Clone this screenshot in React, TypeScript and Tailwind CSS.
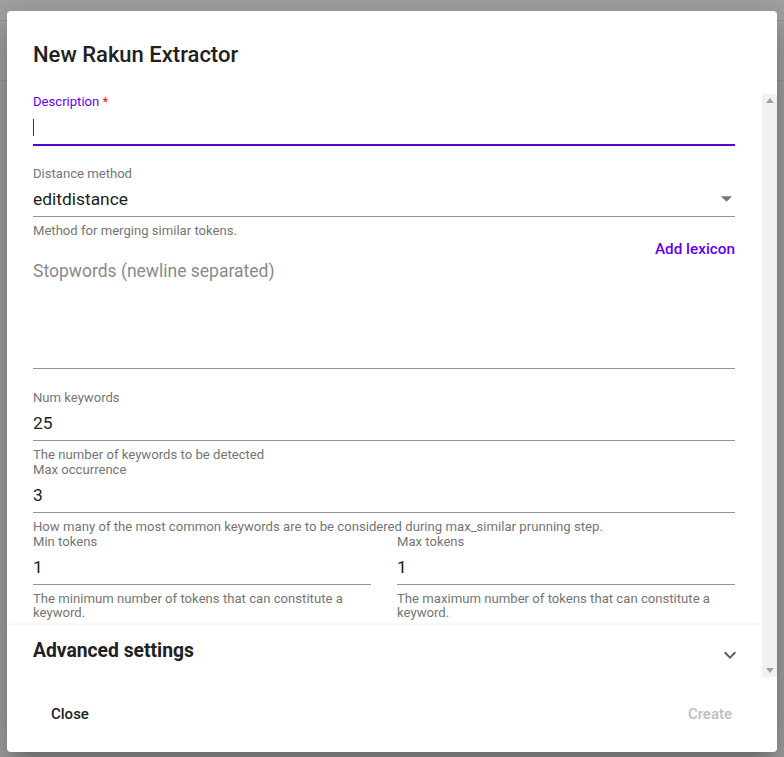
import React from "react";

const font = { fontFamily: "Roboto, 'Liberation Sans', sans-serif" };

function Field({
  label,
  value,
  helper,
}: {
  label: string;
  value: string;
  helper: React.ReactNode;
}) {
  return (
    <div className="flex flex-col">
      <div className="text-[13.1px] leading-[16px] text-[#757575]">{label}</div>
      <div className="h-[35px] border-b border-[#949494] flex items-center text-[17.4px] text-[#212121]">
        {value}
      </div>
      <div className="mt-[7px] text-[13.15px] leading-[14px] text-[#757575]">{helper}</div>
    </div>
  );
}

export default function App() {
  return (
    <div style={font} className="relative h-[757px] w-[784px] overflow-hidden bg-[#a2a2a2]">
      <div className="absolute left-0 right-0 top-[20px] h-px bg-[#939393]" />
      <div className="absolute left-0 right-0 top-[80px] h-px bg-[#939393]" />
      <div className="absolute left-[7px] top-[11px] w-[770px] h-[741px] bg-white rounded-[4px] shadow-[0_11px_15px_-7px_rgba(0,0,0,0.2),0_24px_38px_3px_rgba(0,0,0,0.14),0_9px_46px_8px_rgba(0,0,0,0.12)] flex flex-col overflow-hidden">
        <div className="h-[83px] pl-[26px] pt-[28px]">
          <div className="text-[22px] leading-[32px] font-medium text-[#212121]">New Rakun Extractor</div>
        </div>
        <div className="h-[583px] flex">
          <div className="flex-1 overflow-hidden flex flex-col">
            <div className="pl-[26px] pr-[27px] flex flex-col">
              {/* Description */}
              <div className="flex flex-col">
                <div className="text-[13.1px] leading-[16px] text-[#6200ee]">
                  Description <span className="text-[#f50057]">*</span>
                </div>
                <div className="h-[36px] border-b-2 border-[#5600d6] flex items-center">
                  <div className="w-px h-[17px] bg-[#5600d6] mt-[1px]" />
                </div>
              </div>
              <div className="mt-[20px]">
                <div className="text-[13.1px] leading-[16px] text-[#757575]">Distance method</div>
                <div className="h-[35px] border-b border-[#949494] flex items-center justify-between text-[17.4px] text-[#212121]">
                  <span>editdistance</span>
                  <svg width="11" height="6" viewBox="0 0 10 5" className="mr-[3px]">
                    <path d="M0 0 L5 5 L10 0 Z" fill="#757575" />
                  </svg>
                </div>
                <div className="mt-[7px] text-[13.1px] leading-[14px] text-[#757575]">
                  Method for merging similar tokens.
                </div>
              </div>
              <div className="flex justify-end mt-px">
                <span className="text-[15.3px] leading-[20px] font-medium text-[#6200ee]">Add lexicon</span>
              </div>
              <div className="h-[110px] border-b border-[#949494]">
                <div className="text-[17.5px] leading-[24px] text-[#8a8a8a]">Stopwords (newline separated)</div>
              </div>
              <div className="mt-[21px] flex flex-col">
                <Field label="Num keywords" value="25" helper="The number of keywords to be detected" />
                <Field
                  label="Max occurrence"
                  value="3"
                  helper="How many of the most common keywords are to be considered during max_similar prunning step."
                />
                <div className="grid grid-cols-2 gap-x-[26px]">
                  <Field
                    label="Min tokens"
                    value="1"
                    helper="The minimum number of tokens that can constitute a keyword."
                  />
                  <Field
                    label="Max tokens"
                    value="1"
                    helper="The maximum number of tokens that can constitute a keyword."
                  />
                </div>
              </div>
            </div>
            <div className="mt-[5px] h-[52px] rounded-t-[4px] bg-white shadow-[0_-1px_3px_0_rgba(0,0,0,0.08),0_1px_1px_0_rgba(0,0,0,0.06)] flex items-center justify-between pl-[26px] pr-[20px]">
              <span className="text-[19.3px] font-bold text-[#212121] mt-[1px]">Advanced settings</span>
              <svg width="24" height="24" viewBox="0 0 24 24" className="mt-[8px]">
                <path d="M7.41 8.59 12 13.17l4.59-4.58L18 10l-6 6-6-6 1.41-1.41z" fill="#5f5f5f" />
              </svg>
            </div>
          </div>
          {/* scrollbar */}
          <div className="w-[15px] bg-[#f1f1f1] flex flex-col justify-between items-center py-[4px]">
            <svg width="8" height="5" viewBox="0 0 8 5">
              <path d="M0 5 L4 0 L8 5 Z" fill="#a3a3a3" />
            </svg>
            <svg width="8" height="5" viewBox="0 0 8 5">
              <path d="M0 0 L4 5 L8 0 Z" fill="#a3a3a3" />
            </svg>
          </div>
        </div>
        <div className="flex-1 flex items-center justify-between pl-[44px] pr-[45px]">
          <span className="text-[15px] font-medium text-[#212121]">Close</span>
          <span className="text-[15px] font-medium text-[#bdbdbd]">Create</span>
        </div>
      </div>
    </div>
  );
}
